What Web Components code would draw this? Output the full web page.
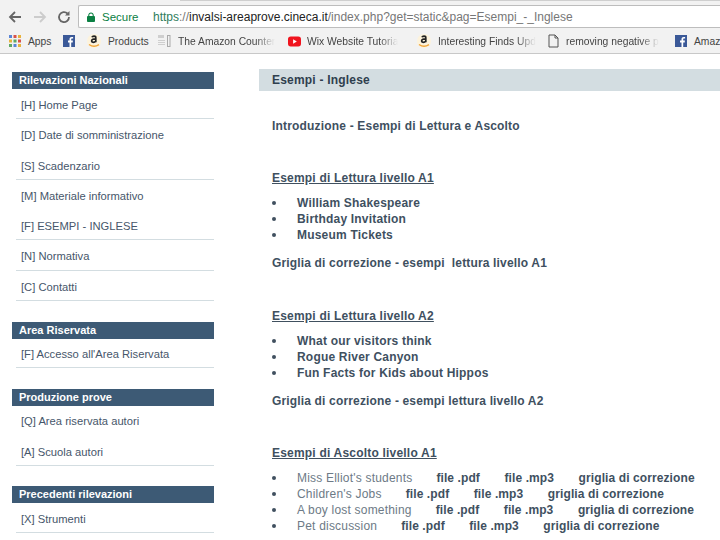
<!DOCTYPE html>
<html>
<head>
<meta charset="utf-8">
<title>Esempi - Inglese</title>
<style>
  html, body { margin: 0; padding: 0; background: #fff; }
  body { width: 720px; height: 540px; overflow: hidden; font-family: "Liberation Sans", Arial, sans-serif; }
</style>
</head>
<body>
<browser-chrome></browser-chrome>
<div style="display:flex;align-items:flex-start">
  <side-bar>
    <nav-group title="Rilevazioni Nazionali" style="height:250px">
      <nav-item line>[H] Home Page</nav-item>
      <nav-item>[D] Date di somministrazione</nav-item>
      <nav-item line>[S] Scadenzario</nav-item>
      <nav-item>[M] Materiale informativo</nav-item>
      <nav-item line>[F] ESEMPI - INGLESE</nav-item>
      <nav-item line>[N] Normativa</nav-item>
      <nav-item line>[C] Contatti</nav-item>
    </nav-group>
    <nav-group title="Area Riservata" style="height:67px">
      <nav-item line style="height:29px;padding-top:9px">[F] Accesso all'Area Riservata</nav-item>
    </nav-group>
    <nav-group title="Produzione prove" style="height:97px">
      <nav-item style="height:30px;padding-top:9px">[Q] Area riservata autori</nav-item>
      <nav-item line style="height:29.500px">[A] Scuola autori</nav-item>
    </nav-group>
    <nav-group title="Precedenti rilevazioni">
      <nav-item line style="height:29.500px">[X] Strumenti</nav-item>
    </nav-group>
  </side-bar>
  <main-page>
    <page-title>Esempi - Inglese</page-title>
    <page-link style="margin-top:27px">Introduzione - Esempi di Lettura e Ascolto</page-link>
    <level-section style="margin-top:36px" title="Esempi di Lettura livello A1" grid="Griglia di correzione - esempi &nbsp;lettura livello A1">
      <doc-row>William Shakespeare</doc-row>
      <doc-row>Birthday Invitation</doc-row>
      <doc-row>Museum Tickets</doc-row>
    </level-section>
    <level-section style="margin-top:36.6px" title="Esempi di Lettura livello A2" grid="Griglia di correzione - esempi lettura livello A2">
      <doc-row>What our visitors think</doc-row>
      <doc-row>Rogue River Canyon</doc-row>
      <doc-row>Fun Facts for Kids about Hippos</doc-row>
    </level-section>
    <level-section style="margin-top:36.4px" title="Esempi di Ascolto livello A1">
      <doc-row plain="Miss Elliot's students" files></doc-row>
      <doc-row plain="Children's Jobs" files></doc-row>
      <doc-row plain="A boy lost something" files></doc-row>
      <doc-row plain="Pet discussion" files></doc-row>
    </level-section>
  </main-page>
</div>
<script>
class BrowserChrome extends HTMLElement {
  constructor() {
    super();
    this.attachShadow({ mode: "open" });
    // icon, label, width of the whole bookmark, fade the end of the label
    const marks = [
      ["apps", "Apps", 54, false],
      ["fb", "", 24, false],
      ["amz", "Products", 70, false],
      ["page", "The Amazon Counter", 131, true],
      ["yt", "Wix Website Tutoria", 129, true],
      ["amz", "Interesting Finds Upd", 131, true],
      ["doc", "removing negative p", 127, true],
      ["fb", "Amaz", 30, false],
    ];
    const icons = {
      apps: `<svg width="12" height="12" viewBox="0 0 12 12"><rect width="3" height="3" fill="#5b85d6"/><rect x="4.500" width="3" height="3" fill="#d9534a"/><rect x="9" width="3" height="3" fill="#e8b33c"/><rect y="4.500" width="3" height="3" fill="#e8b33c"/><rect x="4.500" y="4.500" width="3" height="3" fill="#5fa863"/><rect x="9" y="4.500" width="3" height="3" fill="#d9534a"/><rect y="9" width="3" height="3" fill="#5fa863"/><rect x="4.500" y="9" width="3" height="3" fill="#5b85d6"/><rect x="9" y="9" width="3" height="3" fill="#e8b33c"/></svg>`,
      fb: `<svg width="12" height="12" viewBox="0 0 12 12"><rect width="12" height="12" fill="#3b5998"/><path d="M8.200 12V7.400h1.500l.2-1.800H8.200V4.500c0-.5.2-.9.9-.9h1V2c-.3 0-.8-.1-1.300-.1-1.400 0-2.300.8-2.300 2.400v1.300H5v1.800h1.500V12z" fill="#fff"/></svg>`,
      amz: `<svg width="14" height="14" viewBox="0 0 14 14"><circle cx="7" cy="7" r="7" fill="#fdf3dc"/><path d="M2 10.500c3 2.200 7 2.200 10 .2" fill="none" stroke="#f0a63c" stroke-width="1.500"/><path d="M5 3.200c.4-1.300 3.800-1.700 3.800.5v4.500M8.800 4.800C6.500 4.800 4.600 5.300 4.600 7c0 1.800 3 1.600 4.200.2" fill="none" stroke="#222" stroke-width="1.700"/></svg>`,
      page: `<svg width="14" height="14" viewBox="0 0 14 14"><g fill="#cfcfcf"><rect x="1" y="1" width="6" height="3"/><rect x="1" y="6" width="7" height="1"/><rect x="1" y="8" width="7" height="1"/><rect x="1" y="10" width="7" height="1"/></g><rect x="10.500" y="1.500" width="2.500" height="11" fill="none" stroke="#aaa"/></svg>`,
      yt: `<svg style="margin-right:-1px" width="13" height="11" viewBox="0 0 14 11"><rect width="14" height="11" rx="3" fill="#f0141e"/><path d="M5.500 3v5l4-2.500z" fill="#fff"/></svg>`,
      doc: `<svg width="11" height="14" viewBox="0 0 11 14"><path d="M1 1h6l3 3v9H1zM7 1v3h3" fill="none" stroke="#555"/></svg>`,
    };
    const bookmarks = marks.map(([icon, label, w, fade]) => `<a class="mark" style="width:${w}px"><span class="ico">${icons[icon]}</span>${label ? `<span class="lbl${fade ? " cut" : ""}">${label}</span>` : ""}</a>`).join("");
    this.shadowRoot.innerHTML = `
      <style>
        :host { display: block; height: 53px; background: #f2f2f2; border-bottom: 1px solid #c8c8c8; font-family: "Liberation Sans", Arial, sans-serif; overflow: hidden; }
        .strip { height: 1px; background: #cfcfcf; margin-left: 180px; }
        .tools { display: flex; align-items: flex-start; height: 25px; padding: 4px 0 0 8px; }
        .nav { display: flex; gap: 10.5px; align-items: center; width: 70px; height: 23px; }
        .url { flex: 1; display: flex; align-items: center; height: 21px; background: #fff; border: 1px solid #bdbdbd; border-right: 0; border-radius: 2px 0 0 2px; font-size: 12px; white-space: nowrap; overflow: hidden; }
        .lock { margin: 0 7px 0 8px; }
        .secure { color: #0b8043; width: 51px; font-size: 11.5px; }
        .host { color: #222; }
        .dim { color: #777; }
        .scheme { color: #2f7d5c; }
        .marks { display: flex; align-items: center; height: 22px; padding-left: 9px; white-space: nowrap; overflow: hidden; font-size: 10.3px; color: #444; }
        .mark { display: inline-flex; align-items: center; gap: 7px; flex: none; }
        .ico { display: inline-flex; }
        .lbl { display: block; flex: none; }
        .cut { -webkit-mask-image: linear-gradient(to right, #000 80%, transparent); mask-image: linear-gradient(to right, #000 80%, transparent); }
      </style>
      <div class="strip"></div>
      <div class="tools">
        <div class="nav">
          <svg width="14" height="14" viewBox="0 0 14 14"><path d="M13 7H2M7 2L2 7l5 5" fill="none" stroke="#666" stroke-width="1.800"/></svg>
          <svg width="14" height="14" viewBox="0 0 14 14"><path d="M1 7h11M7 2l5 5-5 5" fill="none" stroke="#ccc" stroke-width="1.800"/></svg>
          <svg width="14" height="14" viewBox="0 0 14 14"><path d="M12 7a5 5 0 1 1-1.500-3.500" fill="none" stroke="#666" stroke-width="1.800"/><path d="M12.500 1v4.500H8z" fill="#666"/></svg>
        </div>
        <div class="url">
          <svg class="lock" width="8" height="10" viewBox="0 0 9 11"><path d="M2 5V3.500a2.500 2.500 0 0 1 5 0V5" fill="none" stroke="#0b8043" stroke-width="1.200"/><rect y="4.500" width="9" height="6.500" rx="1" fill="#0b8043"/></svg>
          <span class="secure">Secure</span>
          <span><span class="scheme">https</span><span class="dim">://</span><span class="host">invalsi-areaprove.cineca.it</span><span class="dim">/index.php?get=static&amp;pag=Esempi_-_Inglese</span></span>
        </div>
      </div>
      <div class="marks">${bookmarks}</div>
    `;
  }
}

class SideBar extends HTMLElement {
  constructor() {
    super();
    this.attachShadow({ mode: "open" });
    this.shadowRoot.innerHTML = `
      <style>
        :host { display: block; width: 202px; margin: 18px 0 0 12px; flex: none; }
      </style>
      <slot></slot>
    `;
  }
}

class NavGroup extends HTMLElement {
  constructor() {
    super();
    this.attachShadow({ mode: "open" });
    this.shadowRoot.innerHTML = `
      <style>
        :host { display: block; box-sizing: border-box; }
        h3 { margin: 0; height: 17px; line-height: 17px; padding-left: 7px; background: #3d5a75; color: #fff; font-size: 11px; font-weight: bold; }
        .items { padding-left: 4px; }
      </style>
      <h3></h3>
      <div class="items"><slot></slot></div>
    `;
  }

  connectedCallback() {
    this.shadowRoot.querySelector("h3").textContent = this.getAttribute("title") || "";
  }
}

class NavItem extends HTMLElement {
  constructor() {
    super();
    this.attachShadow({ mode: "open" });
    this.shadowRoot.innerHTML = `
      <style>
        :host { display: block; box-sizing: border-box; height: 30.25px; padding: 10px 0 0 5px; font-size: 11.2px; line-height: 13px; color: #46566a; white-space: nowrap; border-bottom: 1px solid transparent; }
        :host([line]) { border-bottom-color: #d3dde1; }
      </style>
      <slot></slot>
    `;
  }
}

class MainPage extends HTMLElement {
  constructor() {
    super();
    this.attachShadow({ mode: "open" });
    this.shadowRoot.innerHTML = `
      <style>
        :host { display: block; flex: 1; margin: 15px 0 0 45px; min-width: 0; }
      </style>
      <slot></slot>
    `;
  }
}

class PageTitle extends HTMLElement {
  constructor() {
    super();
    this.attachShadow({ mode: "open" });
    this.shadowRoot.innerHTML = `
      <style>
        :host { display: block; height: 22px; line-height: 22px; padding-left: 13px; background: #d3dde1; color: #2f3f4e; font-size: 12px; font-weight: bold; letter-spacing: .2px; }
      </style>
      <slot></slot>
    `;
  }
}

class PageLink extends HTMLElement {
  constructor() {
    super();
    this.attachShadow({ mode: "open" });
    this.shadowRoot.innerHTML = `
      <style>
        :host { display: block; padding-left: 13px; line-height: 16px; color: #40505f; font-size: 12px; font-weight: bold; letter-spacing: .18px; }
      </style>
      <slot></slot>
    `;
  }
}

class LevelSection extends HTMLElement {
  constructor() {
    super();
    this.attachShadow({ mode: "open" });
    this.shadowRoot.innerHTML = `
      <style>
        :host { display: block; padding-left: 13px; color: #40505f; font-size: 12px; font-weight: bold; letter-spacing: .2px; }
        h4 { margin: 0 0 9px; font: inherit; line-height: 16px; text-decoration: underline; }
        .grid { margin-top: 12px; line-height: 16px; letter-spacing: .16px; }
        .grid:empty { display: none; }
      </style>
      <h4></h4>
      <slot></slot>
      <div class="grid"></div>
    `;
  }

  connectedCallback() {
    this.shadowRoot.querySelector("h4").textContent = this.getAttribute("title") || "";
    this.shadowRoot.querySelector(".grid").textContent = this.getAttribute("grid") || "";
  }
}

class DocRow extends HTMLElement {
  constructor() {
    super();
    this.attachShadow({ mode: "open" });
    this.shadowRoot.innerHTML = `
      <style>
        :host { display: flex; align-items: center; height: 16px; line-height: 16px; padding-left: 25px; position: relative; white-space: nowrap; }
        :host::before { content: ""; position: absolute; left: 0; top: 6px; width: 4px; height: 4px; border-radius: 50%; background: #40505f; }
        .plain { font-weight: normal; color: #6d7a86; margin-right: 24px; }
        .plain:empty { display: none; }
        .files { display: flex; gap: 24.5px; letter-spacing: .1px; }
        .files[hidden] { display: none; }
      </style>
      <span class="plain"></span>
      <slot></slot>
      <span class="files" hidden><span>file .pdf</span><span>file .mp3</span><span>griglia di correzione</span></span>
    `;
  }

  connectedCallback() {
    this.shadowRoot.querySelector(".plain").textContent = this.getAttribute("plain") || "";
    this.shadowRoot.querySelector(".files").hidden = !this.hasAttribute("files");
  }
}

customElements.define("browser-chrome", BrowserChrome);
customElements.define("side-bar", SideBar);
customElements.define("nav-group", NavGroup);
customElements.define("nav-item", NavItem);
customElements.define("main-page", MainPage);
customElements.define("page-title", PageTitle);
customElements.define("page-link", PageLink);
customElements.define("level-section", LevelSection);
customElements.define("doc-row", DocRow);
</script>
</body>
</html>
